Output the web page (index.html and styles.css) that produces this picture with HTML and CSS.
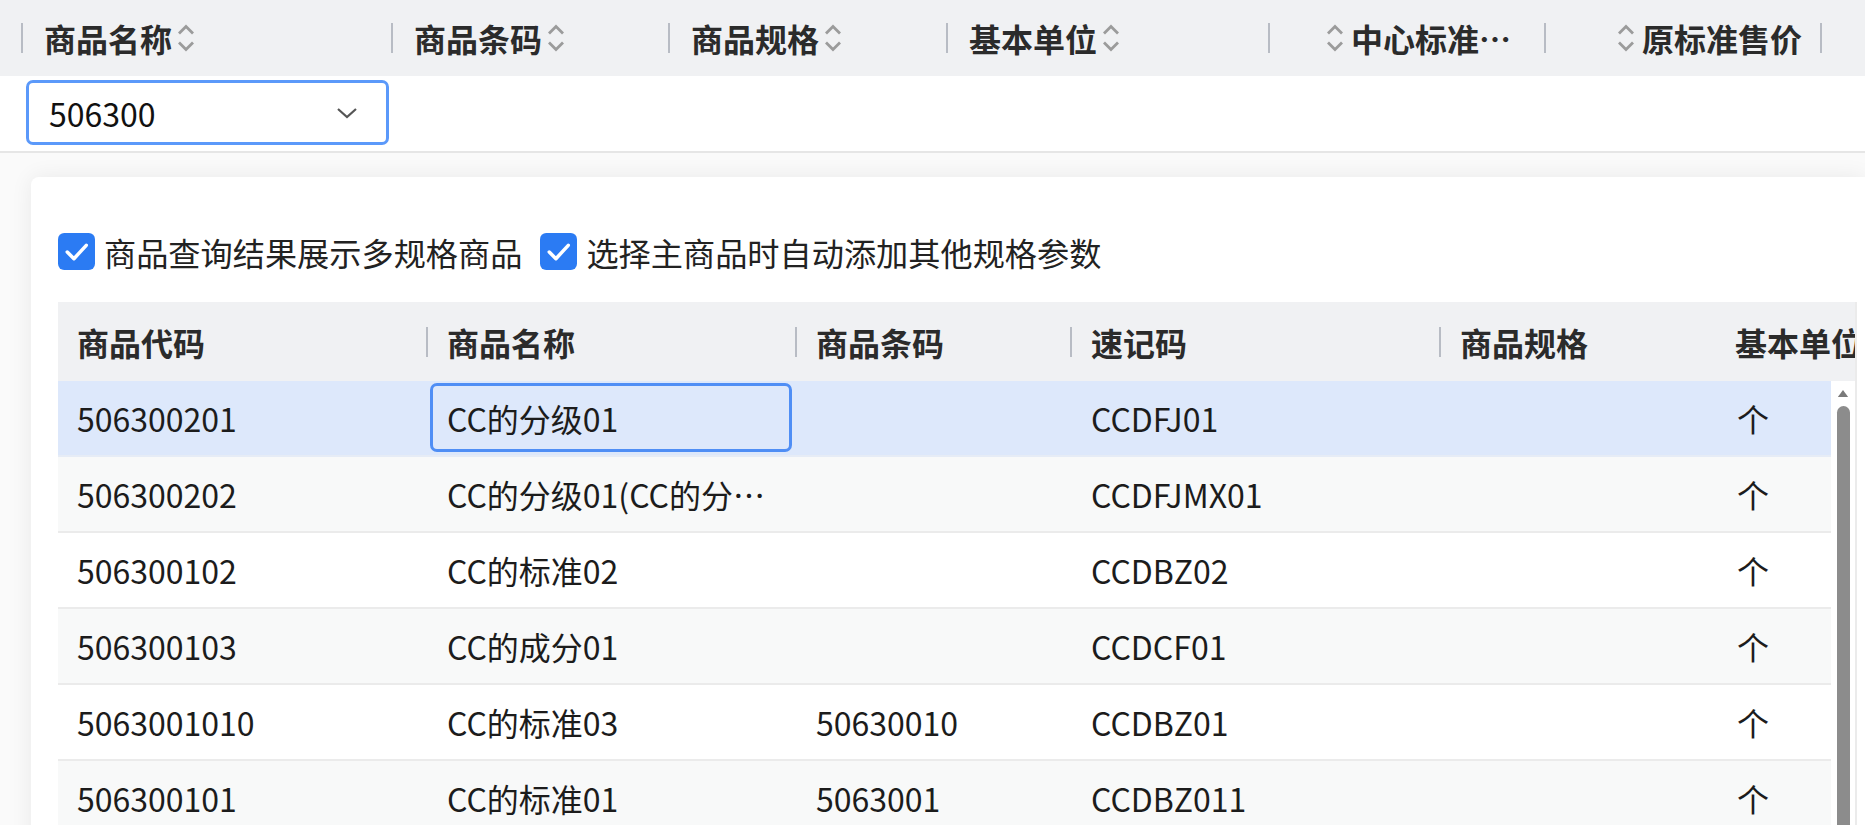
FILE: index.html
```html
<!DOCTYPE html>
<html lang="zh-CN">
<head>
    <meta charset="UTF-8">
    <title>商品选择</title>
    <link rel="stylesheet" href="styles.css">
</head>
<body>
    <div class="grid-head">
        <div class="hcell c1"><span class="sep"></span><span class="htext">商品名称</span><span class="sort"><svg viewBox="0 0 18 28"><path d="M2 9.5 L9 2.5 L16 9.5 M2 18.5 L9 25.5 L16 18.5"/></svg></span></div>
        <div class="hcell c2"><span class="sep"></span><span class="htext">商品条码</span><span class="sort"><svg viewBox="0 0 18 28"><path d="M2 9.5 L9 2.5 L16 9.5 M2 18.5 L9 25.5 L16 18.5"/></svg></span></div>
        <div class="hcell c3"><span class="sep"></span><span class="htext">商品规格</span><span class="sort"><svg viewBox="0 0 18 28"><path d="M2 9.5 L9 2.5 L16 9.5 M2 18.5 L9 25.5 L16 18.5"/></svg></span></div>
        <div class="hcell c4"><span class="sep"></span><span class="htext">基本单位</span><span class="sort"><svg viewBox="0 0 18 28"><path d="M2 9.5 L9 2.5 L16 9.5 M2 18.5 L9 25.5 L16 18.5"/></svg></span></div>
        <div class="hcell c5 right"><span class="sep"></span><span class="sort"><svg viewBox="0 0 18 28"><path d="M2 9.5 L9 2.5 L16 9.5 M2 18.5 L9 25.5 L16 18.5"/></svg></span><span class="htext">中心标准…</span></div>
        <div class="hcell c6 right"><span class="sep"></span><span class="sort"><svg viewBox="0 0 18 28"><path d="M2 9.5 L9 2.5 L16 9.5 M2 18.5 L9 25.5 L16 18.5"/></svg></span><span class="htext">原标准售价</span></div>
        <div class="hcell c7"><span class="sep"></span></div>
    </div>

    <div class="filter-row">
        <div class="select-box">
            <span class="select-value">506300</span>
            <svg class="chevron" viewBox="0 0 22 14"><path d="M2 3 L11 11 L20 3"/></svg>
        </div>
    </div>

    <div class="main">
        <div class="card">
            <div class="options">
                <label class="check">
                    <svg class="box" viewBox="0 0 36 36"><rect width="36" height="36" rx="6"/><path d="M9 18.5 L15.5 25 L27.5 12"/></svg>
                    <span>商品查询结果展示多规格商品</span>
                </label>
                <label class="check">
                    <svg class="box" viewBox="0 0 36 36"><rect width="36" height="36" rx="6"/><path d="M9 18.5 L15.5 25 L27.5 12"/></svg>
                    <span>选择主商品时自动添加其他规格参数</span>
                </label>
            </div>

            <div class="table">
                <div class="thead">
                    <div class="th first">商品代码</div>
                    <div class="th"><span class="tsep"></span>商品名称</div>
                    <div class="th"><span class="tsep"></span>商品条码</div>
                    <div class="th"><span class="tsep"></span>速记码</div>
                    <div class="th"><span class="tsep"></span>商品规格</div>
                    <div class="th"><span class="tsep"></span>基本单位</div>
                </div>
                <div class="tbody">
                    <div class="rows">
                        <div class="tr selected">
                            <div class="td">506300201</div>
                            <div class="td editing"><div class="edit-box">CC的分级01</div></div>
                            <div class="td"></div>
                            <div class="td">CCDFJ01</div>
                            <div class="td"></div>
                            <div class="td">个</div>
                        </div>
                        <div class="tr stripe">
                            <div class="td">506300202</div>
                            <div class="td"><span class="clip">CC的分级01(CC的分级01明细)</span></div>
                            <div class="td"></div>
                            <div class="td">CCDFJMX01</div>
                            <div class="td"></div>
                            <div class="td">个</div>
                        </div>
                        <div class="tr">
                            <div class="td">506300102</div>
                            <div class="td">CC的标准02</div>
                            <div class="td"></div>
                            <div class="td">CCDBZ02</div>
                            <div class="td"></div>
                            <div class="td">个</div>
                        </div>
                        <div class="tr stripe">
                            <div class="td">506300103</div>
                            <div class="td">CC的成分01</div>
                            <div class="td"></div>
                            <div class="td">CCDCF01</div>
                            <div class="td"></div>
                            <div class="td">个</div>
                        </div>
                        <div class="tr">
                            <div class="td">5063001010</div>
                            <div class="td">CC的标准03</div>
                            <div class="td">50630010</div>
                            <div class="td">CCDBZ01</div>
                            <div class="td"></div>
                            <div class="td">个</div>
                        </div>
                        <div class="tr stripe">
                            <div class="td">506300101</div>
                            <div class="td">CC的标准01</div>
                            <div class="td">5063001</div>
                            <div class="td">CCDBZ011</div>
                            <div class="td"></div>
                            <div class="td">个</div>
                        </div>
                    </div>
                    <div class="scrollbar">
                        <svg class="arrow-up" viewBox="0 0 14 10"><path d="M7 1 L13 9 L1 9 Z"/></svg>
                        <div class="thumb"></div>
                    </div>
                </div>
            </div>
        </div>
    </div>
</body>
</html>
```

FILE: styles.css
```css
body {
    margin: 0;
    width: 1865px;
    height: 825px;
    overflow: hidden;
    font-family: "Noto Sans CJK SC", "Noto Sans", sans-serif;
    color: #1c1c1c;
    background-color: #fafafa;
}

/* top grid header */
.grid-head {
    display: flex;
    height: 76px;
    background-color: #f0f1f3;
}

.hcell {
    display: flex;
    align-items: center;
    flex-shrink: 0;
    font-size: 32px;
    font-weight: bold;
    color: #2b2b2b;
    white-space: nowrap;
}

.hcell .sep {
    width: 2px;
    height: 30px;
    margin-right: 21px;
    background-color: #b8bcc4;
}

.hcell.right .sep {
    margin-right: auto;
}

.c1 { margin-left: 21px; width: 370px; }
.c2 { width: 277px; }
.c3 { width: 278px; }
.c4 { width: 322px; }
.c5 { width: 276px; padding-right: 33px; box-sizing: border-box; }
.c6 { width: 276px; padding-right: 18px; box-sizing: border-box; }
.c7 { width: 40px; }

.sort svg {
    display: block;
    width: 18px;
    height: 28px;
    margin: 0 5px;
}

.right .sort svg {
    margin: 0 7px 0 0;
}

.sort path {
    fill: none;
    stroke: #9b9b9b;
    stroke-width: 2.8;
}

/* filter row */
.filter-row {
    height: 71px;
    padding-top: 4px;
    background-color: #fff;
    border-bottom: 2px solid #e6e6e6;
}

.select-box {
    display: flex;
    align-items: center;
    justify-content: space-between;
    width: 363px;
    height: 65px;
    margin-left: 26px;
    padding: 0 28px 0 20px;
    box-sizing: border-box;
    border: 3px solid #5b99fa;
    border-radius: 7px;
    font-size: 32px;
    color: #111;
}

.chevron {
    width: 22px;
    height: 14px;
}

.chevron path {
    fill: none;
    stroke: #555;
    stroke-width: 2.2;
}

/* popup card */
.main {
    padding: 24px 0 0 31px;
}

.card {
    background-color: #fff;
    border-radius: 8px 0 0 0;
    box-shadow: 0 0 22px rgba(0, 0, 0, 0.07);
    padding: 56px 0 0 27px;
    height: 700px;
}

.options {
    display: flex;
    gap: 18px;
    height: 37px;
    margin-bottom: 32px;
}

.check {
    display: flex;
    align-items: center;
    gap: 9px;
    font-size: 32.2px;
    color: #222;
}

.check .box {
    width: 37px;
    height: 37px;
}

.check rect {
    fill: #2b7bf3;
}

.check path {
    fill: none;
    stroke: #fff;
    stroke-width: 3.4;
    stroke-linecap: round;
    stroke-linejoin: round;
}

/* product table */
.table {
    width: 1797px;
    overflow: hidden;
    border-right: 2px solid #ebebeb;
}

.thead,
.tr {
    display: grid;
    grid-template-columns: 368px 369px 275px 369px 277px 1fr;
}

.thead {
    height: 79px;
    background-color: #f0f1f3;
}

.th {
    display: flex;
    align-items: center;
    font-size: 32px;
    font-weight: bold;
    color: #2b2b2b;
    white-space: nowrap;
    overflow: hidden;
}

.th.first {
    padding-left: 19px;
}

.tsep {
    width: 2px;
    height: 30px;
    margin-right: 19px;
    background-color: #b8bcc4;
}

.tbody {
    display: flex;
}

.rows {
    flex: 1;
}

.tr {
    height: 74px;
    border-bottom: 2px solid #ebebeb;
    background-color: #fff;
}

.tr.stripe {
    background-color: #f8f9f9;
}

.tr.selected {
    background-color: #dde8fb;
    border-bottom-color: #e6ecf6;
}

.td {
    display: flex;
    align-items: center;
    padding-left: 19px;
    font-size: 32px;
    white-space: nowrap;
    overflow: hidden;
}

.td:nth-child(n+2) {
    padding-left: 21px;
}

.td.editing {
    padding: 2px 3px 3px 4px;
    align-items: stretch;
}

.edit-box {
    flex: 1;
    display: flex;
    align-items: center;
    padding-left: 14px;
    border: 3px solid #4f8ef5;
    border-radius: 7px;
    background-color: #dde8fb;
}

.clip {
    display: block;
    max-width: 324px;
    overflow: hidden;
    text-overflow: ellipsis;
}

.scrollbar {
    width: 24px;
    display: flex;
    flex-direction: column;
    align-items: center;
    background-color: #fff;
}

.arrow-up {
    width: 12px;
    height: 9px;
    margin: 8px 0 8px;
}

.arrow-up path {
    fill: #7a7a7a;
}

.thumb {
    width: 13px;
    height: 500px;
    border-radius: 7px;
    background-color: #8c8c8c;
}
```
